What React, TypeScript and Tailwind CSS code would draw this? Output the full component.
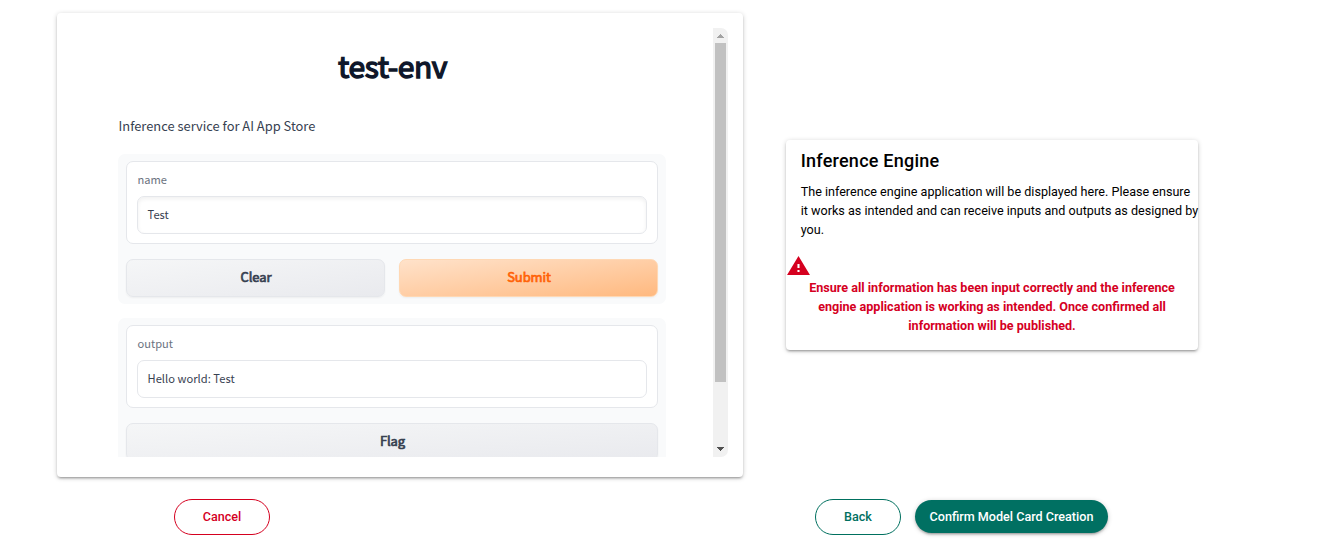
import type { ReactNode } from "react";

const cardShadow =
  "shadow-[0_1px_5px_rgba(0,0,0,0.2),0_2px_2px_rgba(0,0,0,0.14),0_3px_1px_-2px_rgba(0,0,0,0.12)]";
const gray =
  "border-[#e5e7eb] bg-linear-to-br from-[#f5f6f7] from-0% to-[#e9eaee] text-[#374151] [-webkit-text-stroke:0.7px_#374151]";
const orange =
  "border-[#ffd8b4] bg-linear-to-br from-[#ffe2ca] from-0% to-[#ffb97f] text-[#ff6207] [-webkit-text-stroke:0.7px_#ff6207]";

function Field({ label, value, inset }: { label: string; value: string; inset?: boolean }) {
  return (
    <div className="h-[83px] rounded-[7px] border border-[#e5e7eb] bg-white px-[10px] pt-[8px]">
      <div className="h-[26px] pl-[0.5px] text-[11.1px] leading-[19px] text-[#6b7280]">{label}</div>
      <div
        className={`flex h-[38px] items-center rounded-[7px] border border-[#e5e7eb] px-[9.5px] pb-[2px] text-[11.15px] leading-[18px] tracking-[0.03px] text-[#374151] ${
          inset ? "shadow-[inset_0_2px_4px_rgba(0,0,0,0.06)]" : ""
        }`}
      >
        {value}
      </div>
    </div>
  );
}

function GradioButton({ tone, children }: { tone: string; children: ReactNode }) {
  return (
    <button
      className={`h-[38px] flex-1 rounded-[7px] border pb-[3px] pl-px text-[13px] leading-[20px] tracking-[-0.1px] shadow-[0_1px_2px_rgba(0,0,0,0.05)] ${tone}`}
    >
      {children}
    </button>
  );
}

function Scrollbar() {
  return (
    <div className="flex w-[15px] flex-col items-center overflow-hidden rounded-r-[7px] bg-[#f1f1f1]">
      <svg className="h-[15px] w-[15px] shrink-0" viewBox="0 0 15 15" shapeRendering="crispEdges">
        <path d="M7 6h1v1h1v1h1v1h1v1H4V9h1V8h1V7h1z" fill="#a3a3a3" />
      </svg>
      <div className="h-[339px] w-[11px] shrink-0 bg-[#c1c1c1]" />
      <div className="flex-1" />
      <svg className="h-[15px] w-[15px] shrink-0" viewBox="0 0 15 15" shapeRendering="crispEdges">
        <path d="M4 5h7v1h-1v1H9v1H8v1H7V8H6V7H5V6H4z" fill="#505050" />
      </svg>
    </div>
  );
}

export default function App() {
  return (
    <div className="flex h-[548px] w-[1336px] flex-col overflow-hidden bg-white pt-[13px] font-['Roboto',sans-serif] text-black">
      <div className="flex h-[464px] items-center pl-[57px]">
        <section className={`h-[464px] w-[686px] shrink-0 rounded-[4px] bg-white p-[15px] ${cardShadow}`}>
          <div className="flex h-[429px] overflow-hidden font-['Noto_Sans_CJK_SC',sans-serif]">
            <div className="flex-1 overflow-hidden pr-[47px] pl-[46px]">
              <h1 className="pt-[17px] pl-px text-center text-[30px] leading-[40px] tracking-[-0.4px] text-[#0f172a] [-webkit-text-stroke:1.4px_#0f172a]">
                test-env
              </h1>
              <p className="mt-[31px] h-[38px] pl-[0.5px] text-[12.9px] leading-[20px] text-[#374151]">
                Inference service for AI App Store
              </p>
              <div className="h-[150px] rounded-[7px] bg-[#f9fafb] px-[8px] pt-[7px]">
                <Field label="name" value="Test" inset />
                <div className="mt-[15px] flex gap-[14px]">
                  <GradioButton tone={gray}>Clear</GradioButton>
                  <GradioButton tone={orange}>Submit</GradioButton>
                </div>
              </div>
              <div className="mt-[14px] h-[150px] rounded-[7px] bg-[#f9fafb] px-[8px] pt-[7px]">
                <Field label="output" value="Hello world: Test" />
                <div className="mt-[15px] flex">
                  <GradioButton tone={gray}>Flag</GradioButton>
                </div>
              </div>
            </div>
            <Scrollbar />
          </div>
        </section>

        <section className={`ml-[43px] h-[210px] w-[412px] shrink-0 rounded-[4px] bg-white ${cardShadow}`}>
          <h2 className="pt-[8px] pl-[14.7px] text-[18px] leading-[26px] font-medium tracking-[0.24px]">
            Inference Engine
          </h2>
          <p className="mt-[8px] pl-[14.7px] text-[12.6px] leading-[19px] whitespace-nowrap">
            The inference engine application will be displayed here. Please ensure
            <br />
            it works as intended and can receive inputs and outputs as designed by
            <br />
            you.
          </p>
          <svg className="mt-[15px] h-[24px] w-[25px]" viewBox="0 0 24 24" preserveAspectRatio="none" fill="#d5001f">
            <path d="M1 21h22L12 2 1 21zm12-3h-2v-2h2v2zm0-4h-2v-4h2v4z" />
          </svg>
          <p className="text-center text-[12.6px] leading-[19px] font-bold whitespace-nowrap text-[#d5001f]">
            Ensure all information has been input correctly and the inference
            <br />
            engine application is working as intended. Once confirmed all
            <br />
            information will be published.
          </p>
        </section>
      </div>

      <div className="flex items-start pt-[22px] pl-[174px] text-[12.6px] font-medium">
        <button className="h-[36px] w-[96px] rounded-full border border-[#d5001f] text-[#d5001f]">Cancel</button>
        <button className="ml-[545px] h-[36px] w-[86px] rounded-full border border-[#00705f] text-[#00705f]">
          Back
        </button>
        <button
          className={`mt-px ml-[14px] h-[33px] w-[193px] rounded-full bg-[#007062] pt-px text-white ${cardShadow}`}
        >
          Confirm Model Card Creation
        </button>
      </div>
    </div>
  );
}
